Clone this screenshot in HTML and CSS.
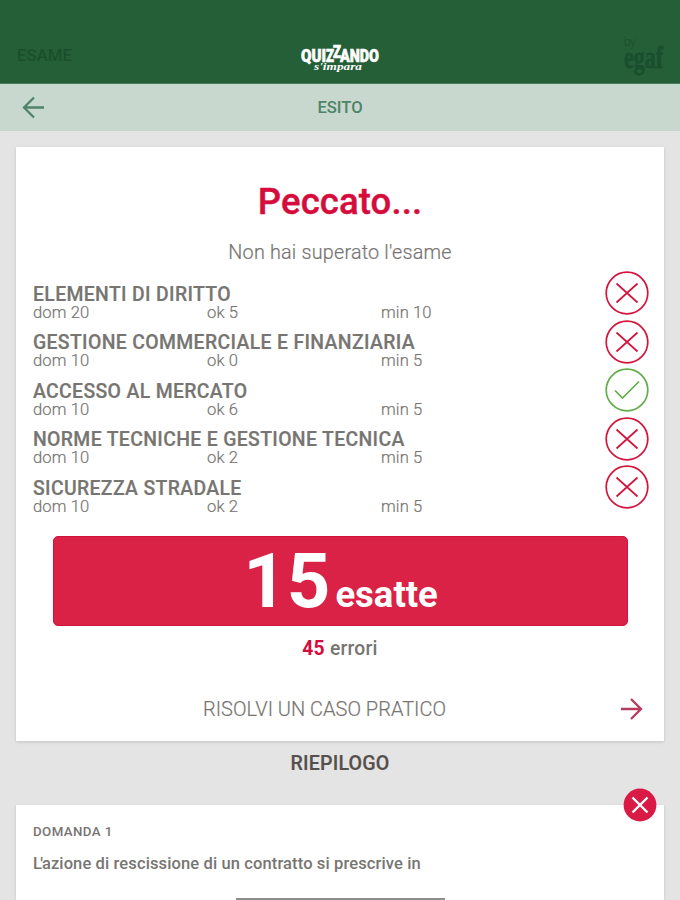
FILE: index.html
```html
<!DOCTYPE html>
<html lang="it">
<head>
<meta charset="utf-8">
<title>Quizzando</title>
<link rel="stylesheet" href="styles.css">
</head>
<body>
<header class="topbar">
  <span class="section">ESAME</span>
  <svg class="logo" width="84" height="36" viewBox="0 0 84 36">
    <g class="logo-main">
      <text x="2" y="21.5" textLength="25" lengthAdjust="spacingAndGlyphs">QUI</text>
      <text x="27" y="21.5" textLength="8" lengthAdjust="spacingAndGlyphs">Z</text>
      <text x="34" y="17.5" textLength="8" lengthAdjust="spacingAndGlyphs">Z</text>
      <text x="41" y="21.5" textLength="39" lengthAdjust="spacingAndGlyphs">ANDO</text>
    </g>
    <text class="logo-sub" x="15" y="30" textLength="48" lengthAdjust="spacingAndGlyphs">s'impara</text>
  </svg>
  <svg class="brand" width="44" height="48" viewBox="0 0 44 48">
    <text class="brand-by" x="4" y="13" textLength="12">by</text>
    <text class="brand-name" x="4" y="35" textLength="39" lengthAdjust="spacingAndGlyphs">egaf</text>
  </svg>
</header>
<nav class="subbar">
  <svg class="back" width="24" height="24" viewBox="0 0 24 24"><path d="M23 11.5H3M13 1.5L3 11.5l10 10"/></svg>
  <span>ESITO</span>
</nav>
<main>
  <section class="card result">
    <h1>Peccato...</h1>
    <p class="lead">Non hai superato l'esame</p>
    <ul class="subjects">
      <li><div><h2>ELEMENTI DI DIRITTO</h2><p class="stats"><span>dom 20</span><span>ok 5</span><span>min 10</span></p></div>
        <svg class="mark bad" viewBox="0 0 44 44"><circle cx="22" cy="22" r="20.8"/><path d="M11.5 12.5l21 19M32.5 12.5l-21 19"/></svg></li>
      <li><div><h2>GESTIONE COMMERCIALE E FINANZIARIA</h2><p class="stats"><span>dom 10</span><span>ok 0</span><span>min 5</span></p></div>
        <svg class="mark bad" viewBox="0 0 44 44"><circle cx="22" cy="22" r="20.8"/><path d="M11.5 12.5l21 19M32.5 12.5l-21 19"/></svg></li>
      <li><div><h2>ACCESSO AL MERCATO</h2><p class="stats"><span>dom 10</span><span>ok 6</span><span>min 5</span></p></div>
        <svg class="mark good" viewBox="0 0 44 44"><circle cx="22" cy="22" r="20.8"/><path d="M10 22.5l7.5 7.5L34 13.5"/></svg></li>
      <li><div><h2>NORME TECNICHE E GESTIONE TECNICA</h2><p class="stats"><span>dom 10</span><span>ok 2</span><span>min 5</span></p></div>
        <svg class="mark bad" viewBox="0 0 44 44"><circle cx="22" cy="22" r="20.8"/><path d="M11.5 12.5l21 19M32.5 12.5l-21 19"/></svg></li>
      <li><div><h2>SICUREZZA STRADALE</h2><p class="stats"><span>dom 10</span><span>ok 2</span><span>min 5</span></p></div>
        <svg class="mark bad" viewBox="0 0 44 44"><circle cx="22" cy="22" r="20.8"/><path d="M11.5 12.5l21 19M32.5 12.5l-21 19"/></svg></li>
    </ul>
    <div class="score"><span class="num">15</span><span class="unit">esatte</span></div>
    <p class="errors"><b>45</b> errori</p>
    <a class="case"><span>RISOLVI UN CASO PRATICO</span>
      <svg width="24" height="24" viewBox="0 0 24 24"><path d="M2 12h20M12 2l10 10-10 10"/></svg></a>
  </section>
  <h3>RIEPILOGO</h3>
  <section class="card question">
    <svg class="badge" width="34" height="34" viewBox="0 0 34 34"><circle cx="17" cy="17" r="16.4"/><path d="M9.5 9.5l15 15M24.5 9.5l-15 15"/></svg>
    <h4>DOMANDA 1</h4>
    <p><span class="elision">L'</span>azione di rescissione di un contratto si prescrive in</p>
    <div class="handle"></div>
  </section>
</main>
</body>
</html>
```
FILE: styles.css
```css
* { box-sizing: border-box; margin: 0; padding: 0; }
body { height: 900px; overflow: hidden; background: #e4e4e4; color: #777572; font-family: Roboto, sans-serif; display: flex; flex-direction: column; }
svg { display: block; fill: none; flex: none; overflow: visible; }
.topbar { height: 84px; padding: 0 16px 0 17px; background: #245f38; border-bottom: 1px solid #457b5a; display: grid; grid-template-columns: 1fr 84px 1fr; align-items: end; }
.section { font-size: 16.8px; font-weight: 500; line-height: 20px; color: #1b4f2c; margin-bottom: 18px; }
.logo { margin-bottom: 7px; }
.logo text { fill: #fff; }
.logo-main { font: 900 17.5px Roboto, sans-serif; stroke: #fff; stroke-width: .6; }
.logo-sub { font: italic 700 10px "Liberation Serif", serif; }
.brand { justify-self: end; margin-bottom: 2px; }
.brand text { fill: #1a4f2e; }
.brand-by { font: 300 12px Roboto, sans-serif; }
.brand-name { font: 700 31px "Liberation Serif", serif; stroke: #1a4f2e; stroke-width: .8; }
.subbar { height: 47px; padding: 0 21px; background: #c8d8cf; color: #4e8467; display: grid; grid-template-columns: 1fr auto 1fr; align-items: center; font-size: 16.6px; font-weight: 500; }
.back { stroke: #4e8467; stroke-width: 2.3; }
main { padding: 16px 16px 0; flex: 1; display: flex; flex-direction: column; }
.card { background: #fff; box-shadow: 0 1px 3px rgba(0,0,0,.15); }
.result { height: 594px; padding: 33px 17px 0; flex: none; }
h1 { font-size: 36.5px; font-weight: 500; line-height: 44px; letter-spacing: .1px; text-align: center; color: #d50d3c; -webkit-text-stroke: .4px #d50d3c; }
.lead { font-size: 19.8px; font-weight: 300; line-height: 24px; letter-spacing: .2px; text-align: center; margin-top: 17px; -webkit-text-stroke: .2px #777572; }
.subjects { list-style: none; margin: 6px -1.5px 0 0; }
.subjects li { height: 48.5px; display: flex; justify-content: space-between; }
.subjects div { padding-top: 13.5px; }
.subjects h2 { font-size: 19.4px; font-weight: 500; line-height: 20px; letter-spacing: .35px; white-space: nowrap; -webkit-text-stroke: .2px #777572; }
.stats { display: grid; grid-template-columns: 174px 174px auto; font-size: 16.6px; font-weight: 300; line-height: 16px; letter-spacing: .1px; -webkit-text-stroke: .2px #777572; }
.mark { width: 44px; height: 44px; }
.bad { stroke: #d3153e; stroke-width: 1.7; }
.good { stroke: #62ad4c; stroke-width: 1.7; }
.score { height: 90px; margin: 22.5px 19px 0 20px; border-radius: 5px; background: #da2146; border: 1px solid #d1123a; color: #fff; display: flex; justify-content: center; align-items: baseline; gap: 5px; font-weight: 700; line-height: 88px; }
.num { font-size: 76px; }
.unit { font-size: 36.5px; }
.errors { margin-top: 10.5px; font-size: 19.3px; font-weight: 500; line-height: 24px; letter-spacing: .25px; text-align: center; }
.errors b { font-weight: 700; color: #d50d3c; }
.case { margin-top: 36.5px; padding-right: 4px; display: flex; align-items: center; line-height: 24px; font-size: 20px; font-weight: 300; -webkit-text-stroke: .2px #777572; }
.case span { flex: 1; padding-right: 3px; text-align: center; }
.case svg { stroke: #b63b5c; stroke-width: 2.3; }
h3 { height: 64px; padding-top: 11px; line-height: 24px; font-size: 19.6px; font-weight: 500; letter-spacing: .2px; text-align: center; color: #55504c; -webkit-text-stroke: .2px #55504c; }
.question { position: relative; flex: 1; padding: 18px 17px 0; display: flex; flex-direction: column; }
.badge { position: absolute; right: 7px; top: -17px; }
.badge circle { fill: #d91a45; }
.badge path { stroke: #fff; stroke-width: 2.4; }
h4 { font-size: 13.3px; font-weight: 500; line-height: 18px; letter-spacing: .4px; }
.question p { margin-top: 12px; font-size: 16.5px; font-weight: 500; line-height: 22px; letter-spacing: .12px; }
.elision { letter-spacing: -1.6px; margin-right: .4px; }
.handle { width: 209px; height: 2px; margin: auto auto 0; background: #8d8d8d; }
```
